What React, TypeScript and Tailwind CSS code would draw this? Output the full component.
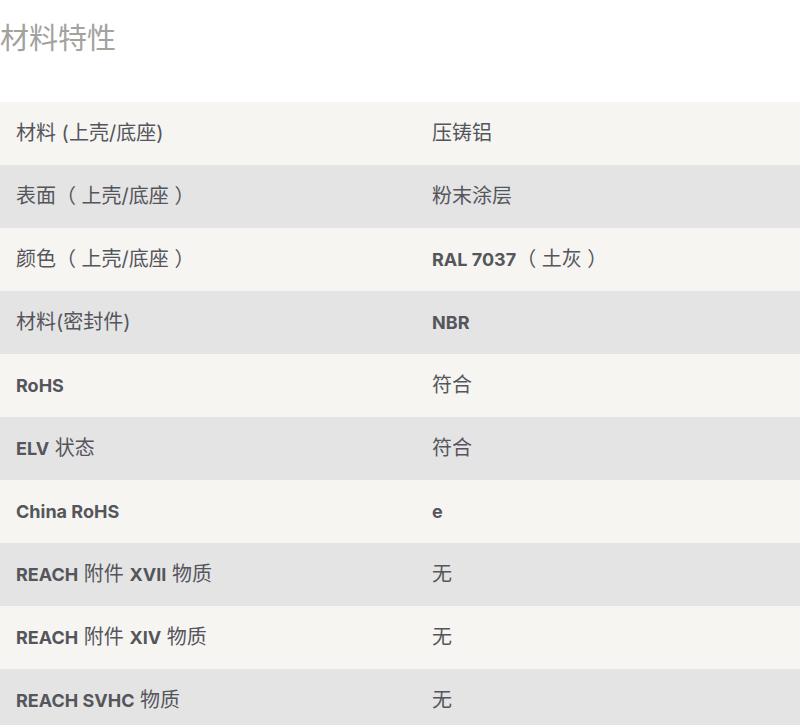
import React from "react";

type Seg = [string, boolean];

const rows: { label: Seg[]; value: Seg[] }[] = [
  { label: [["材料 (上壳/底座)", false]], value: [["压铸铝", false]] },
  { label: [["表面（ 上壳/底座 ）", false]], value: [["粉末涂层", false]] },
  { label: [["颜色（ 上壳/底座 ）", false]], value: [["RAL 7037", true], ["（ 土灰 ）", false]] },
  { label: [["材料(密封件)", false]], value: [["NBR", true]] },
  { label: [["RoHS", true]], value: [["符合", false]] },
  { label: [["ELV", true], [" 状态", false]], value: [["符合", false]] },
  { label: [["China RoHS", true]], value: [["e", true]] },
  { label: [["REACH", true], [" 附件 ", false], ["XVII", true], [" 物质", false]], value: [["无", false]] },
  { label: [["REACH", true], [" 附件 ", false], ["XIV", true], [" 物质", false]], value: [["无", false]] },
  { label: [["REACH SVHC", true], [" 物质", false]], value: [["无", false]] },
];

function Text({ segs }: { segs: Seg[] }) {
  return (
    <span className="whitespace-pre">
      {segs.map(([t, b], i) => (
        <span key={i} className={b ? "font-bold text-[18px]" : "font-normal text-[20px]"}>
          {t}
        </span>
      ))}
    </span>
  );
}

export default function App() {
  return (
    <div
      className="w-[800px] bg-white text-[#55555c]"
      style={{ fontFamily: 'Inter, "Noto Sans CJK SC", sans-serif' }}
    >
      <div className="h-[102px] pt-[19px]">
        <h2 className="text-[29px] leading-[40px] font-normal text-[#a3a29e]">材料特性</h2>
      </div>
      <div>
        {rows.map((r, i) => (
          <div
            key={i}
            className={`grid grid-cols-[416px_1fr] h-[63px] items-center leading-[28px] ${
              i % 2 === 0 ? "bg-[#f6f5f2]" : "bg-[#e4e4e4]"
            }`}
          >
            <div className="px-4">
              <Text segs={r.label} />
            </div>
            <div className="px-4">
              <Text segs={r.value} />
            </div>
          </div>
        ))}
      </div>
    </div>
  );
}
